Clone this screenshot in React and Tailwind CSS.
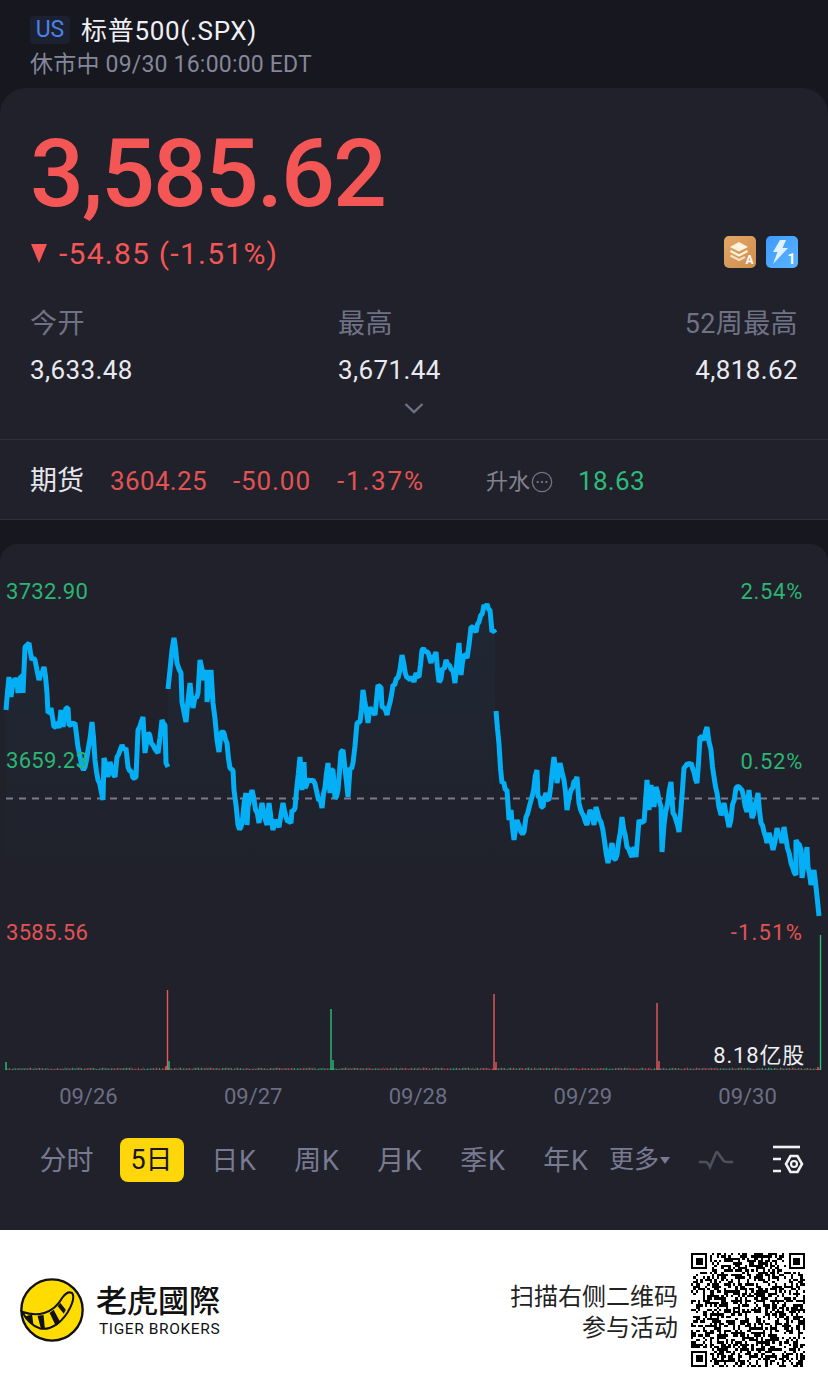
const fontCls = "font-['Roboto','Noto_Sans_CJK_SC',sans-serif]";

// line traced in page coordinates, three sessions with gaps between them
const seg1 = "6,710 9,677 11,697 13,682 17,680 18,693 20,678 23,675 23,693 25,647 29,643 32,660 35,660 39,680 44,667 47,693 48,713 51,708 54,727 57,722 59,728 61,710 63,727 66,708 68,708 69,725 75,723 78,747 82,767 85,767 88,750 92,722 95,760 98,780 103,800 104,758 108,777 110,762 115,777 117,757 122,745 126,748 128,767 133,778 136,777 138,730 143,717 145,753 148,733 153,745 158,753 162,720 165,725 166,763 168,767";
const seg2 = "168,689 172,650 174,638 177,663 181,673 182,702 186,722 190,683 193,708 195,697 198,693 200,660 204,680 207,670 207,702 211,670 213,703 217,740 219,752 221,733 224,733 227,743 230,768 233,770 234,790 238,825 241,827 246,793 247,825 248,807 252,790 259,823 262,803 267,825 269,803 273,830 275,820 279,827 283,803 286,817 291,823 292,810 295,808 300,757 302,790 304,762 305,788 308,780 313,780 317,793 322,808 328,763 330,793 332,770 333,770 335,798 338,790 341,752 343,750 348,797 350,768 353,763 357,723 360,722 363,690 368,723 370,707 375,715 378,685 381,687 382,707 387,715 393,685 398,678 402,655 407,678 413,680 414,682 416,673 419,677 422,650 428,652 431,663 436,652 439,682 446,660 453,670 455,683 459,643 461,675 464,655 467,658 471,627 476,632 479,622 484,605 487,604 490,610 492,632 495,633";
const seg3 = "496,711 502,783 507,790 509,820 511,810 514,840 517,820 521,832 524,832 526,817 532,797 537,770 538,797 543,807 546,793 549,800 554,757 557,783 560,763 564,780 567,810 571,790 577,777 579,803 582,813 587,825 590,810 594,825 596,807 601,822 608,863 612,843 614,859 617,855 622,817 627,847 632,857 634,847 636,857 639,820 644,822 647,780 649,810 651,785 654,807 656,787 659,800 661,807 662,852 664,825 671,782 673,813 679,832 684,768 691,763 697,783 700,737 704,740 707,727 711,750 714,777 717,793 721,815 724,803 729,827 736,788 742,790 747,812 749,790 752,818 758,793 761,823 767,843 769,833 773,850 777,828 782,843 784,827 791,863 796,875 796,840 801,850 802,878 807,847 808,867 811,885 814,870 819,916";

const area = (pts) => {
  const first = pts.split(" ")[0].split(",")[0];
  const last = pts.split(" ").at(-1).split(",")[0];
  return `${first},880 ${pts} ${last},880`;
};

// small deterministic noise for the line, the volume baseline and the QR modules
const rng = (seed) => () => {
  seed = (seed * 1664525 + 1013904223) % 4294967296;
  return seed / 4294967296;
};

// the real series is minute data, so the traced line gets some tick noise between its points
const lineRand = rng(77);
const roughen = (pts) => {
  const p = pts.split(" ").map((s) => s.split(",").map(Number));
  const out = [];
  p.forEach(([x, y], i) => {
    out.push(`${x},${y}`);
    const next = p[i + 1];
    if (!next) return;
    const steps = Math.floor((next[0] - x) / 1.5);
    for (let s = 1; s < steps; s++) {
      const t = s / steps;
      const j = (lineRand() - 0.5) * 7;
      out.push(`${(x + (next[0] - x) * t).toFixed(1)},${(y + (next[1] - y) * t + j).toFixed(1)}`);
    }
  });
  return out.join(" ");
};

const volRand = rng(11);
const volBars = [];
for (let x = 6; x < 820; x += 1.5) {
  volBars.push({ x, h: 1 + volRand() * 1.4, red: volRand() > 0.5 });
}

const spikes = [
  { x: 6, top: 1062, c: "#2ebd78" },
  { x: 167.5, top: 990, c: "#e85a5a" },
  { x: 169, top: 1061, c: "#2ebd78" },
  { x: 166, top: 1066, c: "#e85a5a" },
  { x: 331, top: 1009, c: "#2ebd78" },
  { x: 333, top: 1060, c: "#2ebd78" },
  { x: 494, top: 994, c: "#e85a5a" },
  { x: 496, top: 1062, c: "#e85a5a" },
  { x: 657, top: 1003, c: "#e85a5a" },
  { x: 659, top: 1061, c: "#e85a5a" },
  { x: 820.5, top: 935, c: "#2ebd78" },
  { x: 818, top: 1067, c: "#e85a5a" },
];

const QR_SIZE = 49;
const qrCells = [];
const qrRand = rng(2022);
const inFinder = (x, y) => (x < 8 && y < 8) || (x > QR_SIZE - 9 && y < 8) || (x < 8 && y > QR_SIZE - 9);
for (let y = 0; y < QR_SIZE; y++) {
  for (let x = 0; x < QR_SIZE; x++) {
    if (!inFinder(x, y) && qrRand() > 0.5) qrCells.push([x, y]);
  }
}

const Finder = ({ x, y }) => (
  <g>
    <rect x={x} y={y} width="7" height="7" fill="#000" />
    <rect x={x + 1} y={y + 1} width="5" height="5" fill="#fff" />
    <rect x={x + 2} y={y + 2} width="3" height="3" fill="#000" />
  </g>
);

const QrCode = () => (
  <svg viewBox={`0 0 ${QR_SIZE} ${QR_SIZE}`} shapeRendering="crispEdges" className="w-[114px] h-[114px] shrink-0">
    {qrCells.map(([x, y]) => (
      <rect key={`${x}-${y}`} x={x} y={y} width="1" height="1" fill="#000" />
    ))}
    <Finder x={0} y={0} />
    <Finder x={QR_SIZE - 7} y={0} />
    <Finder x={0} y={QR_SIZE - 7} />
  </svg>
);

const TigerLogo = () => (
  <svg viewBox="0 0 190 190" className="w-[64px] h-[64px] shrink-0">
    <circle cx="95" cy="95" r="91" fill="#ffdc00" stroke="#111" strokeWidth="7" />
    <path d="M6 100 C50 116 98 108 126 58 Q140 38 154 44 Q164 54 150 86 C130 130 92 156 60 150 Q28 140 6 100 Z" fill="#ffdc00" stroke="#111" strokeWidth="6" />
    <path d="M14 114 L36 108 L40 140 Z M52 112 L70 110 L74 152 L62 150 Z M88 104 L100 94 L120 132 L106 142 Z M112 84 L120 74 L136 94 L130 106 Z" fill="#111" />
  </svg>
);

const LayersBadge = () => (
  <svg viewBox="0 0 32 32" className="w-[32px] h-[32px]">
    <defs>
      <linearGradient id="amber" x1="0" y1="0" x2="1" y2="1">
        <stop offset="0" stopColor="#e2a768" />
        <stop offset="1" stopColor="#cf8f4e" />
      </linearGradient>
    </defs>
    <rect width="32" height="32" rx="5" fill="url(#amber)" />
    <path d="M15 6 L24 11 L15 15.5 L6 11 Z" fill="#fff3df" />
    <path d="M6.5 15 L15 19.5 L23.5 15" fill="none" stroke="#fff3df" strokeWidth="2.2" />
    <path d="M6.5 19.5 L15 24 L21 21" fill="none" stroke="#fff3df" strokeWidth="2.2" opacity="0.8" />
    <text x="25.5" y="28" textAnchor="middle" fontSize="12" fontWeight="700" fill="#fff" fontFamily="Roboto, sans-serif">A</text>
  </svg>
);

const BoltBadge = () => (
  <svg viewBox="0 0 32 32" className="w-[32px] h-[32px]">
    <defs>
      <linearGradient id="blue" x1="0" y1="0" x2="1" y2="1">
        <stop offset="0" stopColor="#3e9bfb" />
        <stop offset="1" stopColor="#5ab4ff" />
      </linearGradient>
    </defs>
    <rect width="32" height="32" rx="5" fill="url(#blue)" />
    <path d="M14 4 L20 4 L16.5 12 L22 12 L7 28 L11.5 16 L7 16 Z" fill="#dff1ff" />
    <text x="25.5" y="28" textAnchor="middle" fontSize="14" fontWeight="700" fill="#fff" fontFamily="Roboto, sans-serif">1</text>
  </svg>
);

const Stat = ({ label, value, className }) => (
  <div className={className}>
    <div className="text-[27px] leading-[34px] tracking-[0.4px] text-[#6f7185]">{label}</div>
    <div className="mt-[12px] text-[26px] leading-[34px] tracking-[0.4px] text-[#e9e9ef]">{value}</div>
  </div>
);

const tabs = ["分时", "5日", "日K", "周K", "月K", "季K", "年K"];

export default function App() {
  return (
    <div className={`${fontCls} w-[828px] h-[1390px] overflow-hidden bg-[#16171f]`}>
      {/* title */}
      <div className="h-[88px] pl-[30px] pt-[16px]">
        <div className="flex items-center h-[28px]">
          <span className="w-[40px] h-[28px] flex items-center justify-center rounded-[4px] bg-[#1b2130] text-[23px] text-[#4c82e6]">US</span>
          <span className="ml-[11px] pt-[2px] text-[26px] leading-[30px] tracking-[0.7px] text-[#f0f0f4]">标普500(.SPX)</span>
        </div>
        <div className="mt-[7px] text-[23px] leading-[28px] tracking-[0.2px] text-[#848799]">休市中 09/30 16:00:00 EDT</div>
      </div>

      {/* quote card */}
      <div className="h-[432px] rounded-t-[26px] bg-[#20212b] border-b border-[#2f303b]">
        <div className="h-[352px] border-b border-[#2f303b] relative">
          <div className="pl-[30px] pt-[30px] text-[95px] leading-[112px] font-medium tracking-[-2.1px] text-[#f45656]">3,585.62</div>
          <div className="flex items-center pl-[31px] pr-[30px] h-[38px] mt-[4px]">
            <span className="w-0 h-0 border-l-[8px] border-r-[8px] border-t-[19px] border-l-transparent border-r-transparent border-t-[#f45656]" />
            <span className="ml-[12px] text-[30px] tracking-[1.25px] text-[#f45656]">-54.85 (-1.51%)</span>
            <div className="ml-auto flex gap-[10px] mt-[-3px]">
              <LayersBadge />
              <BoltBadge />
            </div>
          </div>
          <div className="flex pl-[30px] pr-[30px] pt-[35px]">
            <Stat label="今开" value="3,633.48" className="w-[308px]" />
            <Stat label="最高" value="3,671.44" />
            <Stat label="52周最高" value="4,818.62" className="ml-auto text-right" />
          </div>
          <svg viewBox="0 0 20 12" className="absolute left-[404px] top-[314px] w-[20px] h-[12px]">
            <path d="M1.5 2 L10 10 L18.5 2" fill="none" stroke="#6f7185" strokeWidth="2.4" />
          </svg>
        </div>
        <div className="flex items-center h-[79px] pl-[30px] pt-[4px] text-[26px]">
          <span className="w-[80px] text-[27px] text-[#e6e6ec]">期货</span>
          <span className="w-[123px] tracking-[0.35px] text-[#e25353]">3604.25</span>
          <span className="w-[104px] tracking-[0.9px] text-[#e25353]">-50.00</span>
          <span className="w-[149px] tracking-[1.8px] text-[#e25353]">-1.37%</span>
          <span className="w-[44px] text-[22px] text-[#80828f]">升水</span>
          <svg viewBox="0 0 20 20" className="w-[22px] h-[22px] ml-[1px]">
            <circle cx="10" cy="10" r="8.8" fill="none" stroke="#6f7185" strokeWidth="1.2" />
            <circle cx="6" cy="10" r="1" fill="#80828f" />
            <circle cx="10" cy="10" r="1" fill="#80828f" />
            <circle cx="14" cy="10" r="1" fill="#80828f" />
          </svg>
          <span className="ml-[25px] tracking-[0.3px] text-[#2cbb78]">18.63</span>
        </div>
      </div>

      {/* chart card */}
      <div className="mt-[24px] h-[686px] rounded-t-[18px] bg-[#20212b]">
        <div className="relative h-[536px]">
          <svg viewBox="0 544 828 536" className="absolute inset-0 w-full h-full">
            <defs>
              <linearGradient id="fade" x1="0" y1="600" x2="0" y2="880" gradientUnits="userSpaceOnUse">
                <stop offset="0" stopColor="#0cb0f5" stopOpacity="0.05" />
                <stop offset="1" stopColor="#0cb0f5" stopOpacity="0" />
              </linearGradient>
            </defs>
            <polygon points={area(seg1)} fill="url(#fade)" />
            <polygon points={area(seg2)} fill="url(#fade)" />
            <polygon points={area(seg3)} fill="url(#fade)" />
            <line x1="6" y1="798.5" x2="820" y2="798.5" stroke="#7b7b8e" strokeWidth="2" strokeDasharray="7 6" />
            {[seg1, seg2, seg3].map((pts, i) => (
              <polyline key={i} points={roughen(pts)} fill="none" stroke="#05aff5" strokeWidth="5" strokeLinejoin="bevel" />
            ))}
            {volBars.map((b) => (
              <rect key={b.x} x={b.x} y={1070 - b.h} width="1" height={b.h} fill={b.red ? "#a8474d" : "#2b9265"} />
            ))}
            {spikes.map((s) => (
              <line key={s.x} x1={s.x} y1={s.top} x2={s.x} y2="1070" stroke={s.c} strokeWidth="1.4" />
            ))}
          </svg>
          <span className="absolute left-[6px] top-[34px] text-[22px] leading-[28px] tracking-[0.3px] text-[#2cb573]">3732.90</span>
          <span className="absolute left-[6px] top-[203px] text-[22px] leading-[28px] tracking-[0.3px] text-[#2cb573]">3659.23</span>
          <span className="absolute left-[6px] top-[375px] text-[22px] leading-[28px] tracking-[0.3px] text-[#e25353]">3585.56</span>
          <span className="absolute right-[25px] top-[34px] text-[22px] leading-[28px] tracking-[0.7px] text-[#2cb573]">2.54%</span>
          <span className="absolute right-[25px] top-[204px] text-[22px] leading-[28px] tracking-[0.7px] text-[#2cb573]">0.52%</span>
          <span className="absolute right-[25px] top-[375px] text-[22px] leading-[28px] tracking-[1.2px] text-[#e25353]">-1.51%</span>
          <span className="absolute right-[23px] top-[498px] text-[22px] leading-[28px] tracking-[0.8px] text-[#eeeef2]">8.18亿股</span>
        </div>

        <div className="grid grid-cols-[repeat(5,164.8px)] pl-[6px] h-[32px] items-center text-center text-[22px] text-[#6c6e83]">
          <span>09/26</span>
          <span>09/27</span>
          <span>09/28</span>
          <span>09/29</span>
          <span>09/30</span>
        </div>

        <div className="flex items-center pl-[25px] h-[44px] mt-[26px] text-[27px] text-[#777a90]">
          {tabs.map((t) => (
            <div key={t} className="w-[83px] flex justify-center pt-[2px]">
              {t === "5日" ? (
                <span className="ml-[4px] mt-[-2px] w-[64px] h-[44px] flex items-center justify-center rounded-[8px] bg-[#ffd60a] text-[#17181f]">{t}</span>
              ) : t === "分时" ? (
                <span>{t}</span>
              ) : (
                <span className="ml-[3px] tracking-[0.8px]">{t}</span>
              )}
            </div>
          ))}
          <div className="ml-[3px] flex items-center w-[62px]">
            <span className="whitespace-nowrap text-[25px]">更多</span>
            <span className="ml-[1px] w-0 h-0 border-l-[5px] border-r-[5px] border-t-[7px] border-l-transparent border-r-transparent border-t-[#777a90]" />
          </div>
          <svg viewBox="0 0 35 20" className="ml-[27px] w-[35px] h-[20px]">
            <path d="M1 12 H7 Q10 12 12 17 L18 3 Q19 1 20 3 L25 10 Q26 12 29 12 H35" fill="none" stroke="#4e505e" strokeWidth="2.6" />
          </svg>
          <svg viewBox="0 0 32 30" className="ml-[39px] w-[32px] h-[30px]">
            <path d="M1 2 H28" stroke="#f2f2f5" strokeWidth="2.6" />
            <path d="M1 14 H9 M1 26 H9" stroke="#f2f2f5" strokeWidth="2.6" />
            <path d="M15 21 L19.5 13 H26.5 L31 21 L26.5 29 H19.5 Z" transform="translate(-1 -2)" fill="none" stroke="#f2f2f5" strokeWidth="2.6" />
            <circle cx="22" cy="19" r="3" fill="none" stroke="#f2f2f5" strokeWidth="2.2" />
          </svg>
        </div>
      </div>

      {/* promo footer */}
      <div className="h-[160px] bg-white flex items-center pl-[20px] pr-[23px]">
        <TigerLogo />
        <div className="ml-[12px] mt-[-1px]">
          <div className="font-['Noto_Sans_CJK_TC',sans-serif] font-medium text-[31px] leading-[36px] text-[#111]">老虎國際</div>
          <div className="pl-[3px] text-[15.5px] leading-[20px] mt-[2px] tracking-[0.6px] text-[#111]">TIGER BROKERS</div>
        </div>
        <div className="ml-auto text-right text-[24px] leading-[31px] text-[#222] pt-[6px]">
          <div>扫描右侧二维码</div>
          <div>参与活动</div>
        </div>
        <div className="ml-[13px]">
          <QrCode />
        </div>
      </div>
    </div>
  );
}
